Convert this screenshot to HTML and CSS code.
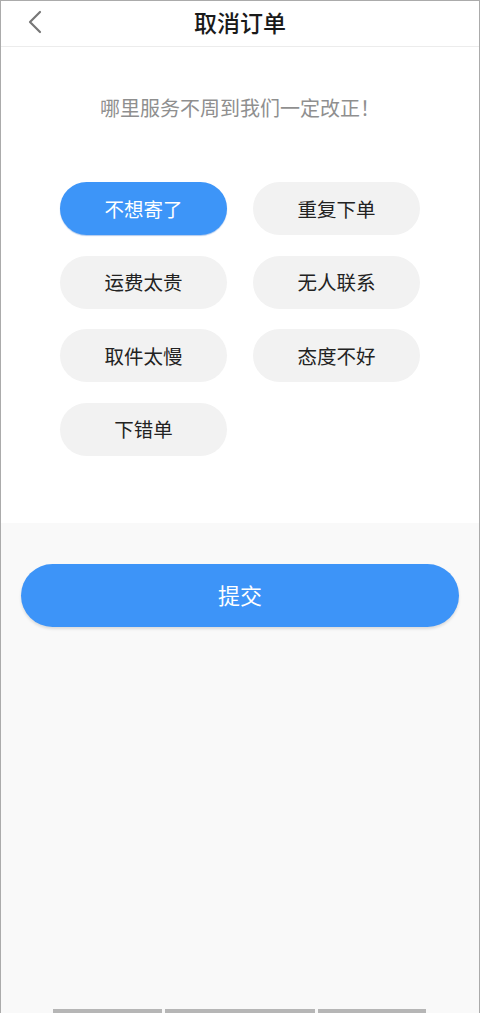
FILE: index.html
```html
<!DOCTYPE html>
<html lang="zh">
<head>
<meta charset="utf-8">
<title>取消订单</title>
<link rel="stylesheet" href="styles.css">
</head>
<body>
<div class="page">
  <header class="topbar">
    <span class="back">
      <svg width="16" height="24" viewBox="0 0 16 24"><path d="M13 2 L3 12 L13 22" fill="none" stroke="#777" stroke-width="2.2" stroke-linecap="round" stroke-linejoin="round"/></svg>
    </span>
    <h1 class="title">取消订单</h1>
  </header>
  <section class="panel">
    <p class="hint">哪里服务不周到我们一定改正！</p>
    <div class="chips">
      <button class="chip active">不想寄了</button>
      <button class="chip">重复下单</button>
      <button class="chip">运费太贵</button>
      <button class="chip">无人联系</button>
      <button class="chip">取件太慢</button>
      <button class="chip">态度不好</button>
      <button class="chip">下错单</button>
    </div>
  </section>
  <div class="actions">
    <button class="submit">提交</button>
  </div>
  <div class="bars">
    <span class="bar b1"></span>
    <span class="bar b2"></span>
    <span class="bar b3"></span>
  </div>
</div>
</body>
</html>
```
FILE: styles.css
```css
* { box-sizing: border-box; }
html, body { margin: 0; padding: 0; }
body {
  font-family: "Noto Sans CJK SC", "Noto Sans", sans-serif;
  background: #f9f9f9;
}
.page {
  width: 480px;
  height: 1013px;
  display: flex;
  flex-direction: column;
  border: 1px solid #ababab;
  border-bottom: none;
  background: #f9f9f9;
}
.topbar {
  height: 46px;
  background: #fff;
  border-bottom: 1px solid #ececec;
  display: flex;
  align-items: center;
  justify-content: center;
  position: relative;
  flex-shrink: 0;
}
.back {
  position: absolute;
  left: 26px;
  top: 9px;
  display: block;
}
.back svg { display: block; }
.title {
  margin: 0;
  font-size: 23px;
  font-weight: 500;
  color: #1a1a1a;
  line-height: 1;
  padding-bottom: 2px;
}
.panel {
  background: #fff;
  padding: 47px 0 67px;
}
.hint {
  margin: 0;
  text-align: center;
  font-size: 20px;
  line-height: 28px;
  color: #8f8f8f;
}
.chips {
  margin-top: 60px;
  display: grid;
  grid-template-columns: 167px 167px;
  column-gap: 26px;
  row-gap: 20.5px;
  justify-content: center;
}
.chip {
  height: 53px;
  border: none;
  border-radius: 27px;
  background: #f2f2f2;
  color: #222;
  font-family: inherit;
  font-size: 19.5px;
  padding: 0;
  padding-bottom: 1px;
}
.chip.active {
  background: #3d95f8;
  color: #fff;
  box-shadow: 0 1px 1px rgba(30, 100, 200, 0.35);
}
.actions {
  padding: 41px 20px 0;
}
.submit {
  width: 100%;
  height: 63px;
  border: none;
  border-radius: 32px;
  background: #3d94f8;
  color: #fff;
  font-family: inherit;
  font-size: 22px;
  padding: 0 0 3px;
  box-shadow: 0 2px 3px rgba(0, 0, 0, 0.12);
}
.bars {
  margin-top: auto;
  display: flex;
  gap: 3px;
  padding-left: 52px;
  height: 4px;
}
.bar {
  height: 4px;
  background: #b6b6b6;
  display: block;
}
.b1 { width: 109px; }
.b2 { width: 150px; }
.b3 { width: 108px; }
```
